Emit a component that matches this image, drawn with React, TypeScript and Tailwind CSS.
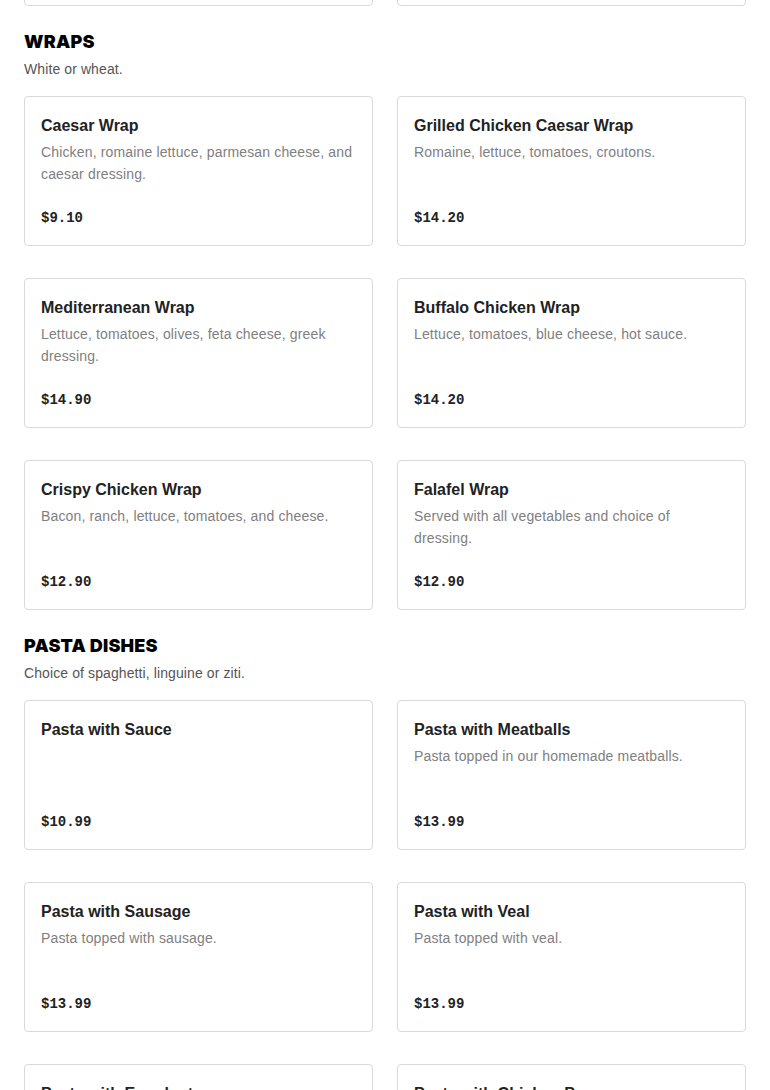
import React from 'react'

type Item = { name: string; desc?: string; price: string }

const sections: { title: string; note: string; items: Item[] }[] = [
  {
    title: 'Wraps',
    note: 'White or wheat.',
    items: [
      { name: 'Caesar Wrap', desc: 'Chicken, romaine lettuce, parmesan cheese, and caesar dressing.', price: '$9.10' },
      { name: 'Grilled Chicken Caesar Wrap', desc: 'Romaine, lettuce, tomatoes, croutons.', price: '$14.20' },
      { name: 'Mediterranean Wrap', desc: 'Lettuce, tomatoes, olives, feta cheese, greek dressing.', price: '$14.90' },
      { name: 'Buffalo Chicken Wrap', desc: 'Lettuce, tomatoes, blue cheese, hot sauce.', price: '$14.20' },
      { name: 'Crispy Chicken Wrap', desc: 'Bacon, ranch, lettuce, tomatoes, and cheese.', price: '$12.90' },
      { name: 'Falafel Wrap', desc: 'Served with all vegetables and choice of dressing.', price: '$12.90' },
    ],
  },
  {
    title: 'Pasta Dishes',
    note: 'Choice of spaghetti, linguine or ziti.',
    items: [
      { name: 'Pasta with Sauce', price: '$10.99' },
      { name: 'Pasta with Meatballs', desc: 'Pasta topped in our homemade meatballs.', price: '$13.99' },
      { name: 'Pasta with Sausage', desc: 'Pasta topped with sausage.', price: '$13.99' },
      { name: 'Pasta with Veal', desc: 'Pasta topped with veal.', price: '$13.99' },
      { name: 'Pasta with Eggplant', desc: 'Pasta topped with eggplant.', price: '$13.99' },
      { name: 'Pasta with Chicken Parmesan', desc: 'Pasta topped with chicken parmesan.', price: '$14.99' },
    ],
  },
]

const MenuCard: React.FC<{ item?: Item }> = ({ item }) => (
  <div className="flex h-[150px] flex-col rounded border border-[#d9d9d9] bg-white px-4 pt-[17px] pb-[17px]">
    {item && (
      <>
        <h3 className="text-[16px] font-semibold leading-6 text-[#222]">{item.name}</h3>
        {item.desc && (
          <p className="mt-[3px] text-[14px] leading-[22px] tracking-[0.15px] text-[#808080]">{item.desc}</p>
        )}
        <p className="mt-auto font-['Liberation_Mono',monospace] text-[14px] font-bold leading-5 text-[#222]">
          {item.price}
        </p>
      </>
    )}
  </div>
)

export default function App() {
  return (
    <div className="min-h-screen overflow-hidden bg-white px-6 font-['Liberation_Sans',Arial,sans-serif]">
      <div className="-mt-[144px] grid grid-cols-2 gap-x-6">
        <MenuCard />
        <MenuCard />
      </div>
      {sections.map((s) => (
        <section key={s.title} className="mt-[24px]">
          <h2 className="font-['Inter',sans-serif] text-[18px] font-black uppercase leading-6 tracking-[0.2px] text-black">
            {s.title}
          </h2>
          <p className="mt-[5px] text-[14px] leading-5 tracking-[0.1px] text-[#555]">{s.note}</p>
          <div className="mt-[17px] grid grid-cols-2 gap-x-6 gap-y-8">
            {s.items.map((it) => (
              <MenuCard key={it.name} item={it} />
            ))}
          </div>
        </section>
      ))}
    </div>
  )
}
